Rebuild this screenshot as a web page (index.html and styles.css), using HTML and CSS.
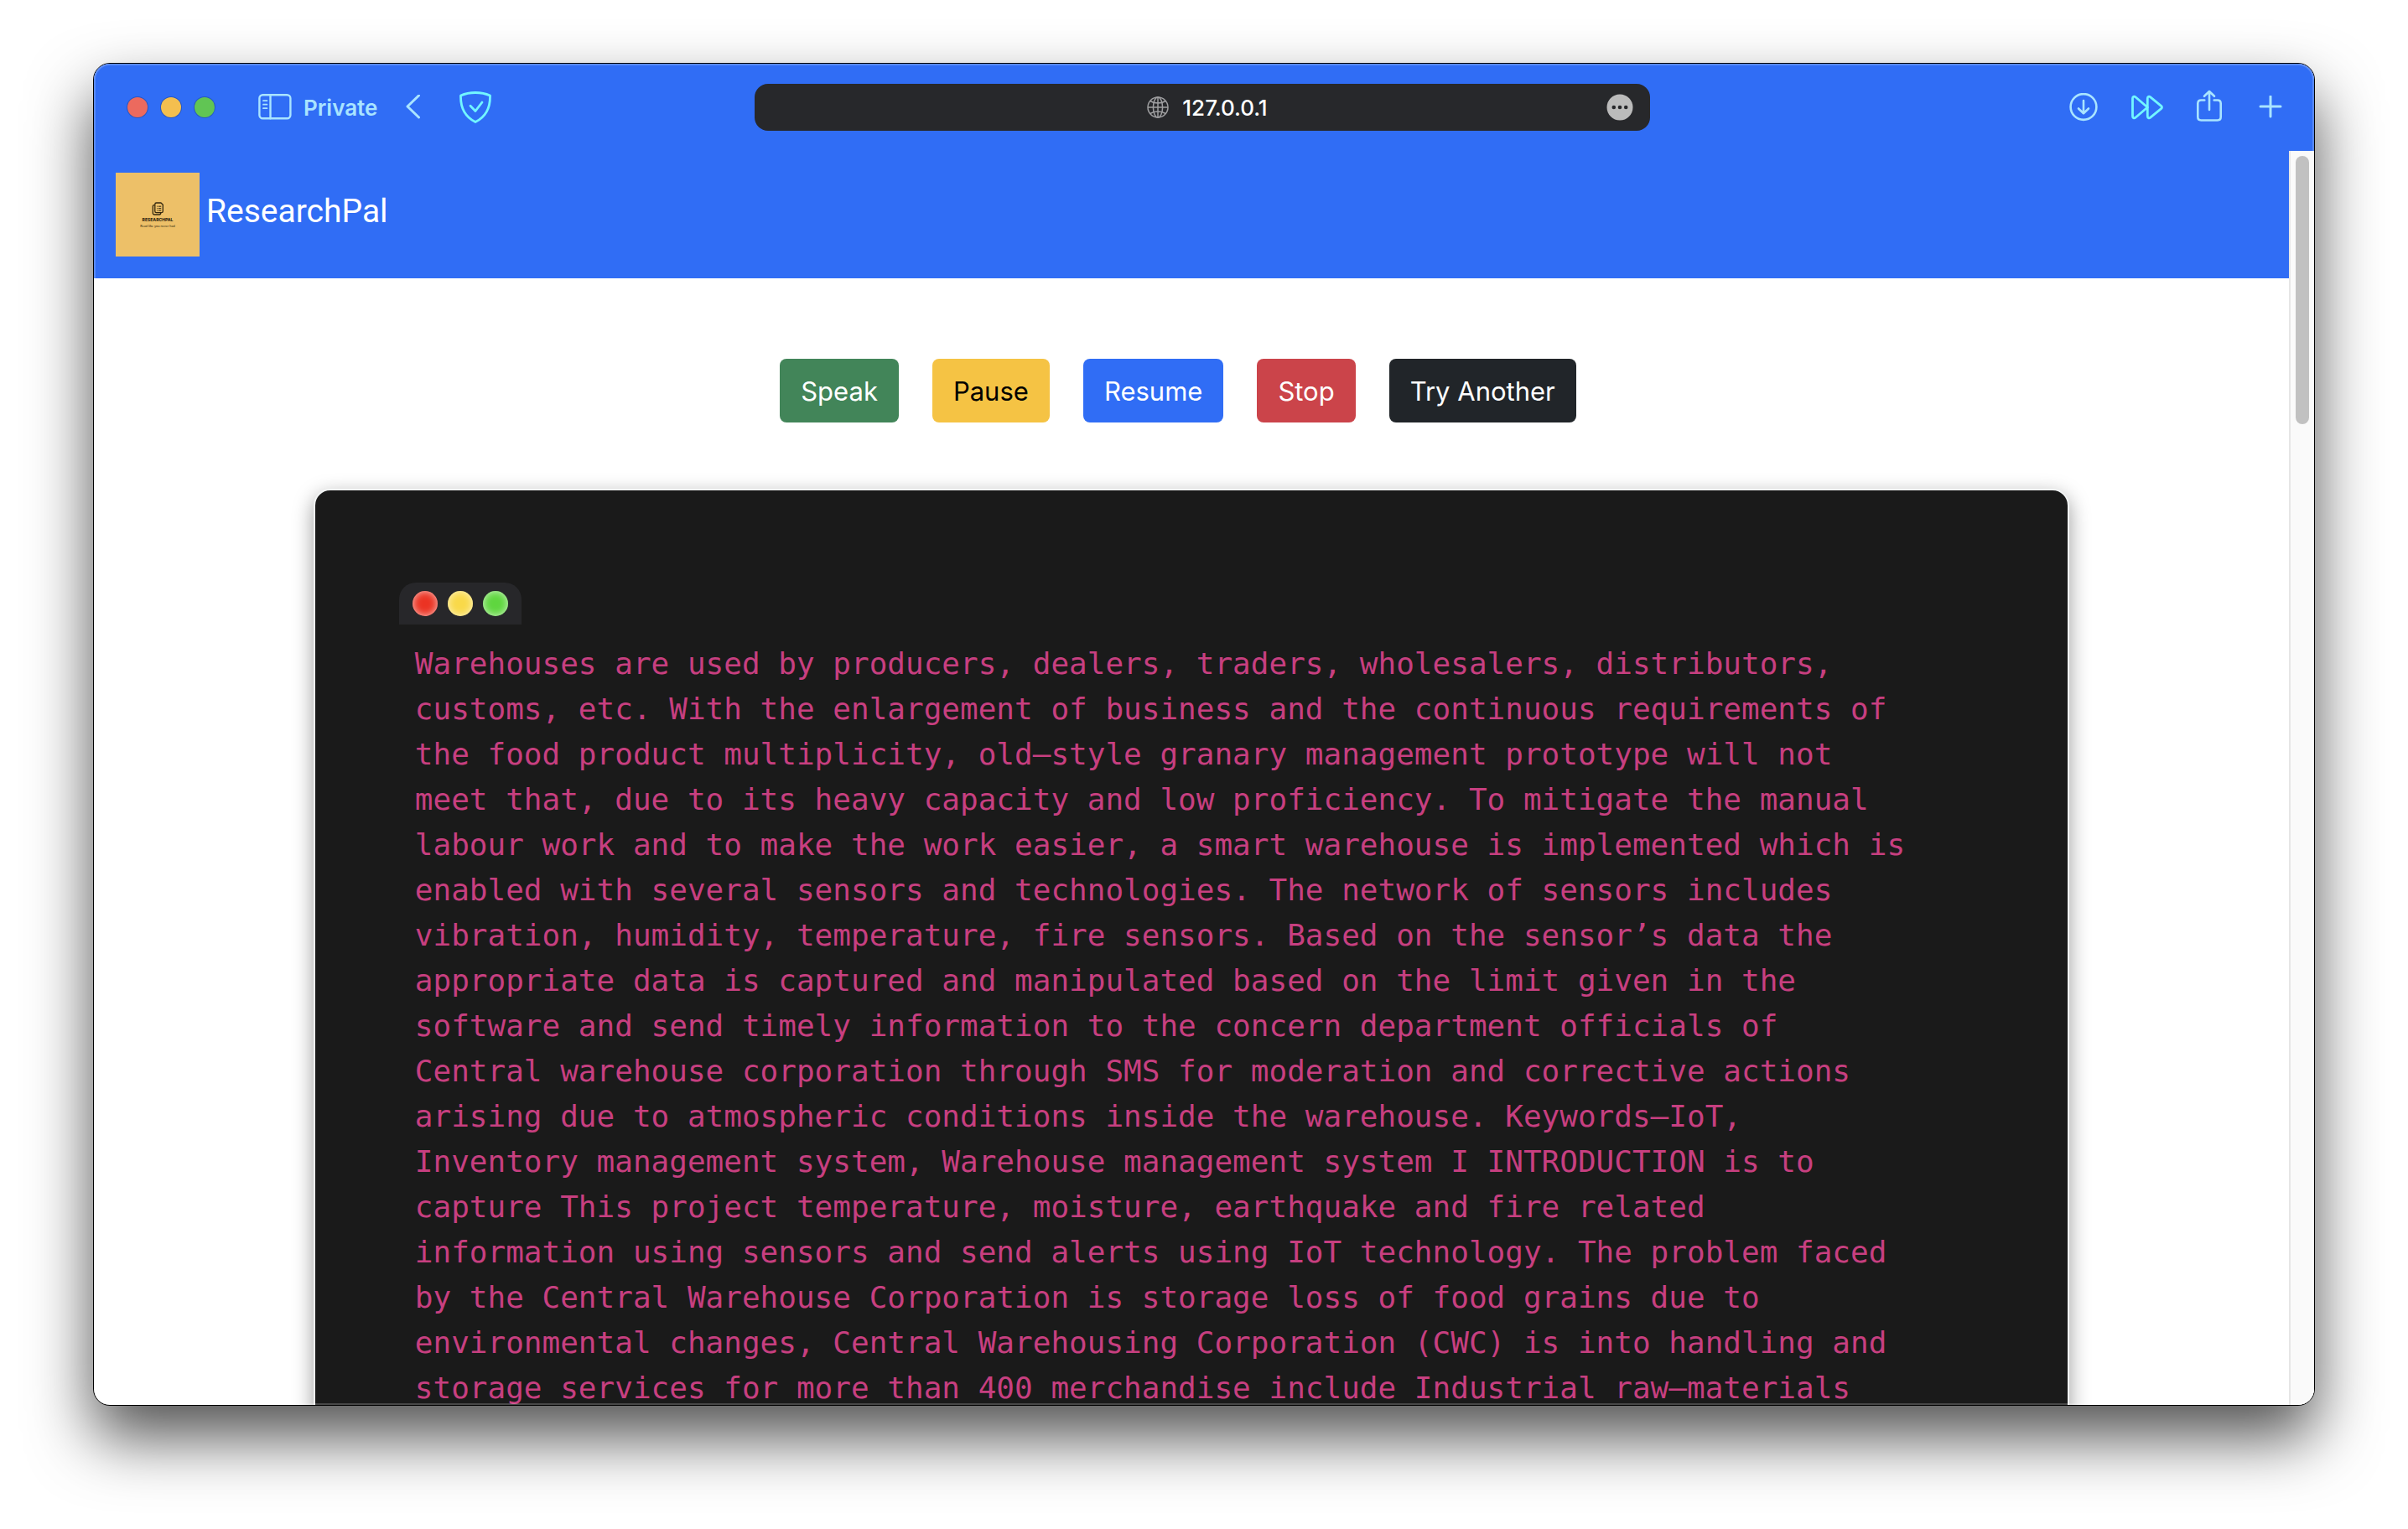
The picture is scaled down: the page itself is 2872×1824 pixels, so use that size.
FILE: index.html
```html
<!DOCTYPE html>
<html lang="en">
<head>
<meta charset="utf-8">
<title>ResearchPal</title>
<link rel="stylesheet" href="styles.css">
</head>
<body>
<div class="window">
  <header class="toolbar">
    <div class="toolbar-left">
      <div class="lights"><span class="light light-red"></span><span class="light light-yellow"></span><span class="light light-green"></span></div>
      <button class="icon-button private" type="button">
        <svg width="40" height="32" viewBox="0 0 40 32" fill="none" stroke="currentColor" stroke-width="2.4" stroke-linecap="round"><rect x="1.4" y="1.2" width="37" height="28" rx="4"/><path d="M14.5 1.2v28"/><path d="M6 8.2h4.400M6 12.700h4.400M6 17.200h4.400" stroke-width="1.800"/></svg>
        <span>Private</span>
      </button>
      <button class="icon-button back" type="button" aria-label="Back">
        <svg width="18" height="30" viewBox="0 0 18 30" fill="none" stroke="currentColor" stroke-width="3" stroke-linecap="round" stroke-linejoin="round"><path d="M15.500 1 2 14l13.500 13"/></svg>
      </button>
      <button class="icon-button shield" type="button" aria-label="Privacy shield">
        <svg width="38" height="38" viewBox="0 0 38 38" fill="none" stroke="currentColor" stroke-width="2.800" stroke-linecap="round" stroke-linejoin="round"><path d="M19 1.500c6.500 0 12.500 1.300 17.500 3.600.4 15-5.500 25.500-17.500 31.500C7 30.600 1.100 20.100 1.500 5.100 6.500 2.800 12.500 1.500 19 1.500z"/><path d="m13 17.200 6 6.300 8-10.500"/></svg>
      </button>
    </div>
    <div class="address">
      <div class="address-text">
        <svg width="26" height="26" viewBox="0 0 26 26" fill="none" stroke="currentColor" stroke-width="1.500"><circle cx="13" cy="13" r="12"/><ellipse cx="13" cy="13" rx="5.600" ry="12"/><path d="M13 1v24M1 13h24M3.800 5.500c5 3.300 13.400 3.300 18.400 0M3.800 20.500c5-3.300 13.400-3.300 18.400 0"/></svg>
        <span>127.0.0.1</span>
      </div>
      <button class="more" type="button" aria-label="Page menu">
        <svg width="32" height="32" viewBox="0 0 32 32"><circle cx="16" cy="16" r="15.500" fill="#bbbbbb"/><g fill="#27282b"><circle cx="8.800" cy="16" r="2.300"/><circle cx="16" cy="16" r="2.300"/><circle cx="23.200" cy="16" r="2.300"/></g></svg>
      </button>
    </div>
    <div class="toolbar-right">
      <button class="icon-button" type="button" aria-label="Downloads">
        <svg width="34" height="34" viewBox="0 0 34 34" fill="none" stroke="currentColor" stroke-width="2.600" stroke-linecap="round" stroke-linejoin="round"><circle cx="17" cy="16.500" r="15.400"/><path d="M17 9v15M11 18.500l6 5.700 6-5.700"/></svg>
      </button>
      <button class="icon-button forward" type="button" aria-label="Skip ahead">
        <svg width="38" height="30" viewBox="0 0 38 30" fill="none" stroke="currentColor" stroke-width="2.800" stroke-linejoin="round"><path d="M19.300 15 5 27.200c-1.600 1.300-3.500.6-3.500-1.600V4.400c0-2.200 1.900-2.900 3.500-1.600z"/><path d="M35.600 13.300c1.200 1 1.200 2.400 0 3.400L22.800 27.200c-1.600 1.300-3.500.6-3.500-1.600V4.400c0-2.200 1.900-2.900 3.500-1.600z"/></svg>
      </button>
      <button class="icon-button share" type="button" aria-label="Share">
        <svg width="30" height="42" viewBox="0 0 30 42" fill="none" stroke="currentColor" stroke-width="2.600" stroke-linecap="round" stroke-linejoin="round"><path d="M9.300 12.500H5.200c-2.400 0-3.900 1.500-3.900 3.900v16.200c0 2.400 1.500 3.900 3.900 3.900h19.600c2.400 0 3.900-1.500 3.900-3.900V16.400c0-2.400-1.500-3.900-3.900-3.900h-4.100"/><path d="M15 24V2M9 7.800 15 2l6 5.800"/></svg>
      </button>
      <button class="icon-button" type="button" aria-label="New tab">
        <svg width="28" height="28" viewBox="0 0 28 28" fill="none" stroke="currentColor" stroke-width="3" stroke-linecap="round"><path d="M14 1v24M2 13h24"/></svg>
      </button>
    </div>
  </header>
  <div class="viewport">
    <div class="page">
      <nav class="navbar">
        <a class="brand" href="#">
          <svg class="logo" viewBox="0 0 100 100" role="img" aria-label="ResearchPal logo">
            <rect width="100" height="100" fill="#edc068"/>
            <g fill="none" stroke="#33270f" stroke-width="1.300" stroke-linejoin="round"><path d="M49.500 36h4.500l2.300 2.300V46c0 1-.7 1.700-1.700 1.700h-6.100c-1 0-1.700-.7-1.700-1.700v-8.300c0-1 .7-1.700 1.700-1.700z"/><path d="M46.500 38.600h-.8c-1 0-1.400.6-1.400 1.500v8.200c0 1 .6 1.700 1.600 1.700h6.200c1 0 1.600-.8 1.600-2"/><path d="M49 40.200h.8m1 0h3.400M49 42.700h.8m1 0h3.400M49 45.200h.8m1 0h3.400" stroke-width="1"/></g>
            <text class="logo-name" x="50" y="58">RESEARCHPAL</text>
            <text class="logo-tagline" x="50" y="65">Read like you never had</text>
          </svg>
          <span class="brand-name">ResearchPal</span>
        </a>
      </nav>
      <div class="controls">
        <button class="btn btn-success" type="button">Speak</button>
        <button class="btn btn-warning" type="button">Pause</button>
        <button class="btn btn-primary" type="button">Resume</button>
        <button class="btn btn-danger" type="button">Stop</button>
        <button class="btn btn-dark" type="button">Try Another</button>
      </div>
      <main class="card">
        <div class="card-tab"><span class="dot dot-red"></span><span class="dot dot-yellow"></span><span class="dot dot-green"></span></div>
        <p class="transcript">Warehouses are used by producers, dealers, traders, wholesalers, distributors, customs, etc. With the enlargement of business and the continuous requirements of the food product multiplicity, old–style granary management prototype will not meet that, due to its heavy capacity and low proficiency. To mitigate the manual labour work and to make the work easier, a smart warehouse is implemented which is enabled with several sensors and technologies. The network of sensors includes vibration, humidity, temperature, fire sensors. Based on the sensor’s data the appropriate data is captured and manipulated based on the limit given in the software and send timely information to the concern department officials of Central warehouse corporation through SMS for moderation and corrective actions arising due to atmospheric conditions inside the warehouse. Keywords—IoT, Inventory management system, Warehouse management system I INTRODUCTION is to capture This project temperature, moisture, earthquake and fire related information using sensors and send alerts using IoT technology. The problem faced by the Central Warehouse Corporation is storage loss of food grains due to environmental changes, Central Warehousing Corporation (CWC) is into handling and storage services for more than 400 merchandise include Industrial raw–materials</p>
      </main>
    </div>
    <div class="scrollbar"><div class="thumb"></div></div>
  </div>
</div>
</body>
</html>
```
FILE: styles.css
```css
* { box-sizing: border-box; }

body {
  margin: 0;
  height: 100vh;
  padding: 75px 111px 147px;
  display: flex;
  flex-direction: column;
  overflow: hidden;
  background: #fff;
  font-family: Inter, "Liberation Sans", sans-serif;
}

button {
  font: inherit;
  border: 0;
  padding: 0;
}

svg { display: block; flex: none; }

/* browser window */
.window {
  position: relative;
  flex: 1;
  min-height: 0;
  display: flex;
  flex-direction: column;
  border: 1px solid #000;
  border-radius: 20px;
  overflow: hidden;
  background: #fff;
  box-shadow: 0 38px 76px rgba(0, 0, 0, .68);
}

/* light rim inside the window edge */
.window::after {
  content: "";
  position: absolute;
  inset: 0;
  border-radius: 19px;
  box-shadow: inset 0 0 0 2px rgba(255, 255, 255, .2);
  pointer-events: none;
}

.toolbar {
  flex: none;
  height: 104px;
  padding: 0 44px 0 40px;
  display: grid;
  grid-template-columns: 1fr minmax(0, 1068px) 1fr;
  align-items: center;
  background: #306df5;
  color: #a9e4ff;
}

.toolbar-left, .toolbar-right { display: flex; align-items: center; }
.toolbar-right { justify-content: flex-end; gap: 40px; margin-right: -6px; }

.lights { display: flex; gap: 16px; margin-right: 52px; }
.light { width: 24px; height: 24px; border-radius: 50%; box-shadow: 0 0 0 1px rgba(0, 0, 0, .2); }
.light-red { background: #ec6a5e; }
.light-yellow { background: #f4bf4f; }
.light-green { background: #61c554; }

.icon-button { background: none; color: inherit; }
.private { display: flex; align-items: center; gap: 14px; font-size: 26px; font-weight: 600; margin-right: 34px; }
.back { margin-right: 46px; }
.share { margin-right: 4px; }
.shield, .forward { color: #72f6ff; }

.address {
  display: grid;
  grid-template-columns: 1fr auto 1fr;
  align-items: center;
  height: 56px;
  padding: 0 20px 0 32px;
  border-radius: 16px;
  background: #27282b;
  color: #9e9ea0;
}
.address-text { grid-column: 2; display: flex; align-items: center; gap: 16px; font-size: 26px; font-weight: 500; }
.address-text span { color: #fff; }
.more { justify-self: end; background: none; }

/* web page */
.viewport { flex: 1; min-height: 0; display: flex; }
.page { flex: 1; min-width: 0; overflow: hidden; }

.scrollbar {
  flex: none;
  width: 30px;
  padding: 6px;
  border-left: 2px solid #e6e6e6;
  background: #fafafa;
}
.thumb { width: 16px; height: 20%; min-height: 320px; border-radius: 8px; background: #c1c1c1; }

.navbar { padding: 26px; background: #306df5; }
.brand { display: flex; align-items: center; gap: 8px; color: #fff; text-decoration: none; }
.logo { width: 100px; height: 100px; }
.logo-name { font: 800 5px Inter, sans-serif; text-anchor: middle; fill: #33270f; }
.logo-tagline { font: 4px Lato, sans-serif; text-anchor: middle; fill: #33270f; }
.brand-name { padding-bottom: 8px; font-family: Roboto, sans-serif; font-size: 39px; line-height: 60px; }

.controls {
  display: flex;
  justify-content: center;
  gap: 40px;
  padding: 96px 32px 79px 0;
}
.btn {
  height: 76px;
  padding: 0 25px;
  border-radius: 8px;
  font-size: 31px;
  color: #fff;
}
.btn-success { background: #428559; }
.btn-warning { background: #f5c344; color: #000; }
.btn-primary { background: #306df5; }
.btn-danger { background: #cb444a; }
.btn-dark { background: #212529; }

.card {
  width: 80%;
  margin: 0 auto 80px;
  padding: 110px 180px 110px 100px;
  border: 2px solid #f1f3f3;
  border-radius: 20px;
  background: #1a1a1a;
  box-shadow: 0 8px 24px rgba(0, 0, 0, .4);
}
.card-tab {
  display: inline-flex;
  gap: 12px;
  padding: 10px 16px;
  border-radius: 20px 20px 0 0;
  background: #27272a;
  vertical-align: top;
}
.dot { width: 30px; height: 30px; border-radius: 50%; box-shadow: inset 0 0 10px rgba(255, 255, 255, .7); }
.dot-red { background: #eb3323; }
.dot-yellow { background: #f9d949; }
.dot-green { background: #5fd63f; }

.transcript {
  margin: 20px 0 0;
  padding-left: 19px;
  font-family: "DejaVu Sans Mono", monospace;
  font-size: 36px;
  line-height: 54px;
  color: #c73f80;
}
```
